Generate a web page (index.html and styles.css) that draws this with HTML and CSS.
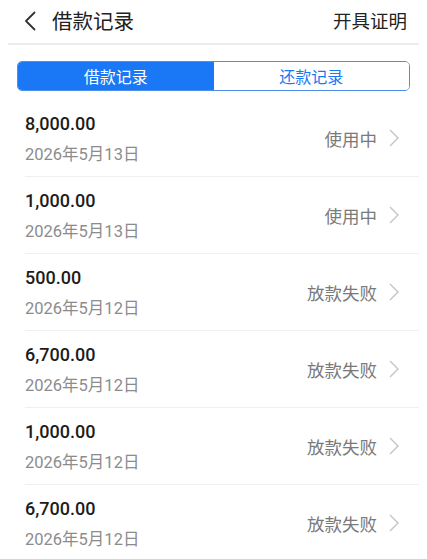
FILE: index.html
```html
<!DOCTYPE html>
<html lang="zh-CN">
<head>
<meta charset="utf-8">
<title>借款记录</title>
<link rel="stylesheet" href="styles.css">
</head>
<body>
<header class="topbar">
  <div class="topbar-left">
    <svg class="back" width="12" height="20" viewBox="0 0 12 20"><path d="M10.5 1.5 L2 10 L10.5 18.5" fill="none" stroke="#333" stroke-width="1.8" stroke-linecap="round" stroke-linejoin="round"/></svg>
    <span class="title">借款记录</span>
  </div>
  <span class="action">开具证明</span>
</header>
<nav class="tabs">
  <div class="tab active">借款记录</div>
  <div class="tab">还款记录</div>
</nav>
<ul class="list">
  <li class="row"><div class="info"><div class="amount">8,000.00</div><div class="date">2026年5月13日</div></div><div class="status">使用中<svg class="chev" width="10" height="18" viewBox="0 0 10 18"><path d="M1 1 L9 9 L1 17" fill="none" stroke="#c4c4c4" stroke-width="1.4"/></svg></div></li>
  <li class="row"><div class="info"><div class="amount">1,000.00</div><div class="date">2026年5月13日</div></div><div class="status">使用中<svg class="chev" width="10" height="18" viewBox="0 0 10 18"><path d="M1 1 L9 9 L1 17" fill="none" stroke="#c4c4c4" stroke-width="1.4"/></svg></div></li>
  <li class="row"><div class="info"><div class="amount">500.00</div><div class="date">2026年5月12日</div></div><div class="status">放款失败<svg class="chev" width="10" height="18" viewBox="0 0 10 18"><path d="M1 1 L9 9 L1 17" fill="none" stroke="#c4c4c4" stroke-width="1.4"/></svg></div></li>
  <li class="row"><div class="info"><div class="amount">6,700.00</div><div class="date">2026年5月12日</div></div><div class="status">放款失败<svg class="chev" width="10" height="18" viewBox="0 0 10 18"><path d="M1 1 L9 9 L1 17" fill="none" stroke="#c4c4c4" stroke-width="1.4"/></svg></div></li>
  <li class="row"><div class="info"><div class="amount">1,000.00</div><div class="date">2026年5月12日</div></div><div class="status">放款失败<svg class="chev" width="10" height="18" viewBox="0 0 10 18"><path d="M1 1 L9 9 L1 17" fill="none" stroke="#c4c4c4" stroke-width="1.4"/></svg></div></li>
  <li class="row"><div class="info"><div class="amount">6,700.00</div><div class="date">2026年5月12日</div></div><div class="status">放款失败<svg class="chev" width="10" height="18" viewBox="0 0 10 18"><path d="M1 1 L9 9 L1 17" fill="none" stroke="#c4c4c4" stroke-width="1.4"/></svg></div></li>
</ul>
</body>
</html>
```
FILE: styles.css
```css
* { box-sizing: border-box; }
html, body { margin: 0; padding: 0; background: #fff; }
body {
  font-family: Roboto, "Noto Sans CJK SC", sans-serif;
  color: #111;
  overflow: hidden;
}
.topbar {
  display: flex;
  align-items: center;
  justify-content: space-between;
  height: 45px;
  margin: 0 8px;
  padding: 0 12px 0 16px;
  border-bottom: 2px solid #ececec;
}
.topbar-left { display: flex; align-items: center; gap: 16px; }
.back { display: block; margin-top: -1px; }
.title { font-size: 20.5px; line-height: 28px; color: #222; }
.action { font-size: 18.5px; line-height: 26px; color: #222; }
.tabs {
  display: flex;
  margin: 16px 17px 0 17px;
  height: 30px;
  border: 1px solid #4d8fe6;
  border-radius: 5px;
  overflow: hidden;
}
.tab {
  flex: 1;
  display: flex;
  align-items: center;
  justify-content: center;
  font-size: 16px;
  color: #1a78f2;
  background: #fff;
}
.tab.active { background: #1a78f6; color: #fff; }
.list { list-style: none; margin: 9px 0 0 0; padding: 0; }
.row {
  display: flex;
  align-items: center;
  justify-content: space-between;
  margin-left: 25px;
  margin-right: 8px;
  padding: 12px 20px 10px 0;
  height: 77px;
  border-bottom: 1px solid #f0f0f0;
}
.amount { font-size: 18px; line-height: 24px; font-weight: 500; color: #1c1c1c; }
.date { margin-top: 8px; font-size: 16.5px; line-height: 22px; color: #8c8c8c; }
.status {
  display: flex;
  align-items: center;
  gap: 12px;
  font-size: 17.5px;
  color: #7a7a7a;
  margin-top: -2px;
}
.chev { display: block; }
```
